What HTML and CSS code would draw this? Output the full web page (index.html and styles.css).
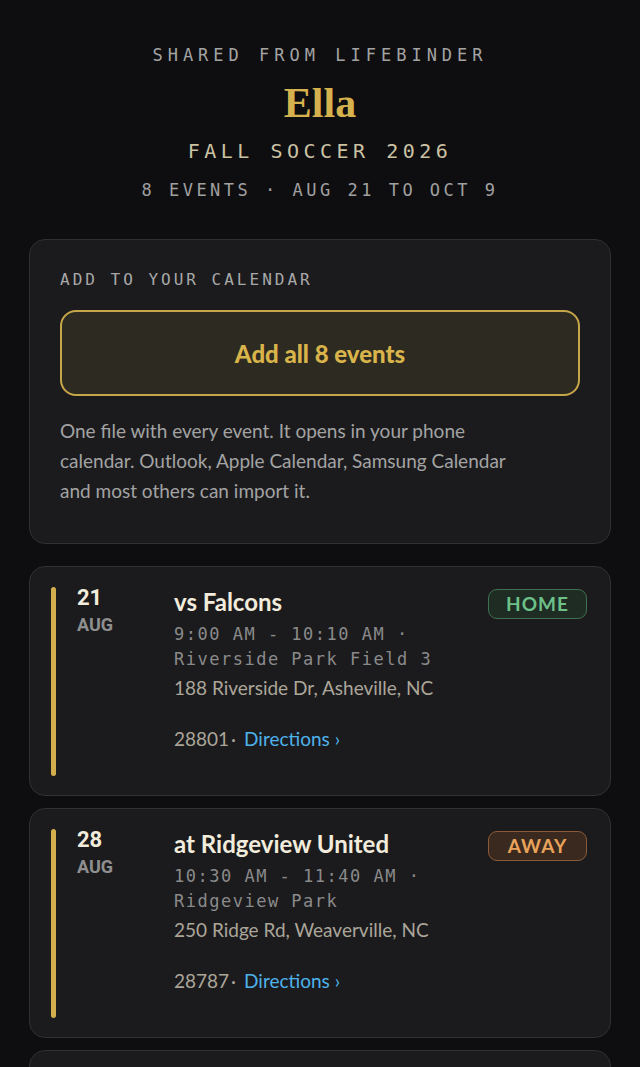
FILE: index.html
```html
<!DOCTYPE html>
<html lang="en">
<head>
    <meta charset="UTF-8">
    <meta name="viewport" content="width=device-width, initial-scale=1.0">
    <title>Ella - Fall Soccer 2026</title>
    <link rel="stylesheet" href="styles.css">
</head>
<body>
    <header class="hero">
        <p class="shared">Shared from Lifebinder</p>
        <h1 class="name">Ella</h1>
        <p class="season">Fall Soccer 2026</p>
        <p class="meta">8 events · Aug 21 to Oct 9</p>
    </header>

    <section class="card add-card">
        <p class="label">Add to your calendar</p>
        <button class="add-all">Add all 8 events</button>
        <p class="note">One file with every event. It opens in your phone calendar. Outlook, Apple Calendar, Samsung Calendar and most others can import it.</p>
    </section>

    <div class="events">
        <article class="card event">
            <div class="bar"></div>
            <div class="date">
                <span class="day">21</span>
                <span class="month">AUG</span>
            </div>
            <div class="info">
                <h2 class="title">vs Falcons</h2>
                <p class="time">9:00 AM - 10:10 AM · Riverside Park Field 3</p>
                <p class="addr">188 Riverside Dr, Asheville, NC</p>
                <p class="dir-row">28801<span class="dot">·</span><a href="#" class="dir">Directions ›</a></p>
            </div>
            <span class="badge home">HOME</span>
        </article>

        <article class="card event">
            <div class="bar"></div>
            <div class="date">
                <span class="day">28</span>
                <span class="month">AUG</span>
            </div>
            <div class="info">
                <h2 class="title">at Ridgeview United</h2>
                <p class="time">10:30 AM - 11:40 AM · Ridgeview Park</p>
                <p class="addr">250 Ridge Rd, Weaverville, NC</p>
                <p class="dir-row">28787<span class="dot">·</span><a href="#" class="dir">Directions ›</a></p>
            </div>
            <span class="badge away">AWAY</span>
        </article>

        <article class="card event">
            <div class="bar"></div>
            <div class="date">
                <span class="day">4</span>
                <span class="month">SEP</span>
            </div>
            <div class="info">
                <h2 class="title">vs Thunder</h2>
                <p class="time">9:00 AM - 10:10 AM · Riverside Park Field 3</p>
                <p class="addr">188 Riverside Dr, Asheville, NC</p>
                <p class="dir-row">28801<span class="dot">·</span><a href="#" class="dir">Directions ›</a></p>
            </div>
            <span class="badge home">HOME</span>
        </article>
    </div>
</body>
</html>
```
FILE: styles.css
```css
body {
    margin: 0;
    padding: 0 29px 40px;
    background-color: #0e0e10;
    font-family: Lato, "Noto Sans", sans-serif;
    color: #f2ecdc;
}
p, h1, h2 {
    margin: 0;
}
.hero {
    padding-top: 43px;
    text-align: center;
    font-family: "DejaVu Sans Mono", monospace;
    text-transform: uppercase;
}
.shared {
    font-size: 17px;
    line-height: 24px;
    letter-spacing: 5px;
    color: #a3a3a3;
}
.name {
    margin-top: 12px;
    font-family: "Liberation Serif", serif;
    font-weight: bold;
    font-size: 42px;
    line-height: 48px;
    color: #d6b24e;
    text-transform: none;
}
.season {
    margin-top: 11px;
    font-size: 20px;
    line-height: 26px;
    letter-spacing: 4.5px;
    color: #cbc2a4;
}
.meta {
    margin-top: 14px;
    font-size: 17px;
    line-height: 24px;
    letter-spacing: 3.5px;
    color: #a0a0a0;
}
.card {
    background-color: #1b1b1e;
    border: 1px solid #303034;
    border-radius: 16px;
}
.add-card {
    margin-top: 37px;
    padding: 29px 30px 37px;
}
.label {
    font-family: "DejaVu Sans Mono", monospace;
    font-size: 16px;
    line-height: 22px;
    letter-spacing: 3px;
    text-transform: uppercase;
    color: #a8a8a8;
}
.add-all {
    display: block;
    width: 100%;
    height: 86px;
    margin-top: 19px;
    background-color: #2d2a21;
    border: 2px solid #c7a64a;
    border-radius: 16px;
    color: #d9b44b;
    font-family: Lato, sans-serif;
    font-weight: 900;
    font-size: 24px;
    cursor: pointer;
}
.note {
    max-width: 465px;
    margin-top: 20px;
    font-size: 19px;
    line-height: 30px;
    color: #a3a3a3;
}
.events {
    margin-top: 22px;
    display: flex;
    flex-direction: column;
    gap: 12px;
}
.event {
    display: flex;
    align-items: flex-start;
    padding: 20px 23px 19px 21px;
}
.bar {
    align-self: stretch;
    width: 5px;
    border-radius: 3px;
    background-color: #d2ae4c;
}
.date {
    display: flex;
    flex-direction: column;
    width: 97px;
    margin-left: 21px;
    font-family: Roboto, sans-serif;
    font-weight: bold;
}
.day {
    font-size: 22px;
    line-height: 22px;
    color: #f2ecdc;
}
.month {
    margin-top: 5px;
    font-size: 18px;
    line-height: 22px;
    color: #8f8f8f;
}
.info {
    flex: 1;
    min-width: 0;
}
.title {
    font-size: 24px;
    line-height: 30px;
    font-weight: bold;
    color: #f2ecdc;
}
.time {
    margin-top: 5px;
    font-family: "DejaVu Sans Mono", monospace;
    font-size: 17px;
    line-height: 25px;
    letter-spacing: 1.5px;
    color: #8a8a8a;
}
.addr {
    margin-top: 3px;
    font-size: 19px;
    line-height: 26px;
    color: #aba699;
}
.dir-row {
    margin-top: 25px;
    padding-bottom: 24px;
    font-size: 19px;
    line-height: 26px;
    color: #aba699;
}
.dot {
    margin: 0 8px 0 2px;
}
.dir {
    color: #4db2ea;
    text-decoration: none;
}
.badge {
    margin: 2px 0 0 20px;
    width: 97px;
    height: 28px;
    line-height: 28px;
    border-radius: 9px;
    text-align: center;
    font-weight: bold;
    font-size: 19px;
    letter-spacing: 1px;
}
.home {
    background-color: #1e2c24;
    border: 1px solid #3f7050;
    color: #6dc088;
}
.away {
    background-color: #3a291f;
    border: 1px solid #8b5b39;
    color: #e9a25a;
}
```
